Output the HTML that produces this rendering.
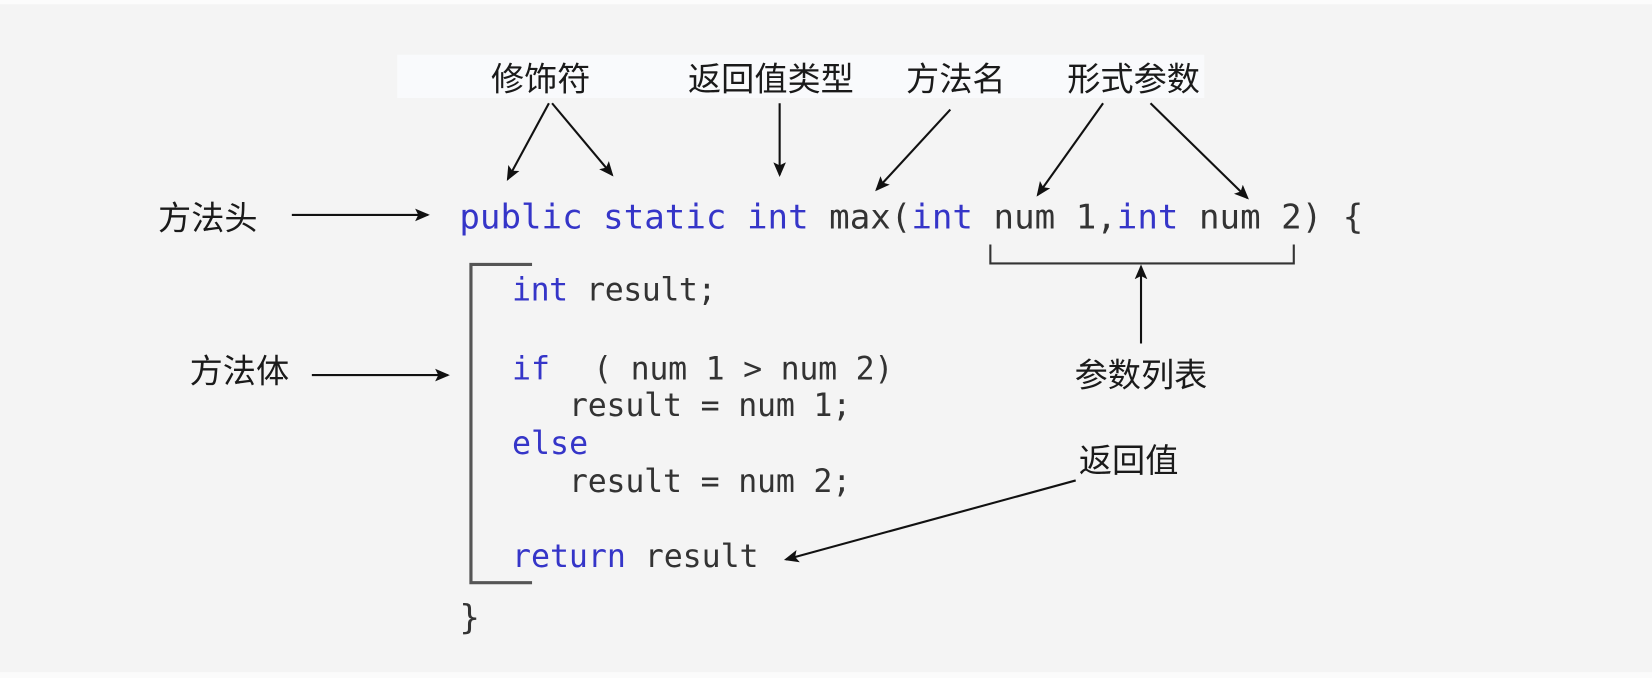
<!DOCTYPE html>
<html><head><meta charset="utf-8"><style>
html,body{margin:0;padding:0;background:#f4f4f4;}
svg{display:block}
.cn{font-family:"Liberation Sans","Noto Sans CJK SC",sans-serif;font-size:31.5px;fill:#1a1a1a}
.c{font-family:"DejaVu Sans Mono","Liberation Mono",monospace;font-size:32.4px;fill:#333}
.c2{font-family:"DejaVu Sans Mono","Liberation Mono",monospace;font-size:30px;fill:#333}
.k{fill:#3535c8}
</style></head><body>
<svg width="1652" height="678" viewBox="0 0 1568 643.5" preserveAspectRatio="none" xmlns="http://www.w3.org/2000/svg">
<defs>
<marker id="b" markerWidth="14" markerHeight="14" refX="12" refY="7" orient="auto" markerUnits="userSpaceOnUse"><path d="M0,1 L14,7 L0,13 L3,7 z" fill="#111"/></marker></defs>
<rect x="0" y="0" width="1568" height="643.5" fill="#f4f4f4"/>
<rect x="0" y="0" width="1568" height="4" fill="#fcfcfc"/>
<rect x="0" y="638" width="1568" height="6" fill="#fbfbfb"/>
<rect x="377" y="52" width="766" height="41" fill="#f9fafc"/>
<g class="cn">
<text x="466" y="86">修饰符</text>
<text x="653" y="86">返回值类型</text>
<text x="860" y="86">方法名</text>
<text x="1013" y="86">形式参数</text>
<text x="150" y="218">方法头</text>
<text x="180" y="363">方法体</text>
<text x="1020" y="367">参数列表</text>
<text x="1024" y="448">返回值</text>
</g>
<g stroke="#111" stroke-width="2" fill="none">
<line x1="521" y1="98" x2="482" y2="170" marker-end="url(#b)"/>
<line x1="524" y1="98" x2="581" y2="166" marker-end="url(#b)"/>
<line x1="740" y1="98" x2="740" y2="166" marker-end="url(#b)"/>
<line x1="902" y1="104" x2="832" y2="180" marker-end="url(#b)"/>
<line x1="1047" y1="98" x2="985" y2="185" marker-end="url(#b)"/>
<line x1="1092" y1="98" x2="1184" y2="188" marker-end="url(#b)"/>
<line x1="277" y1="204" x2="406" y2="204" marker-end="url(#b)"/>
<line x1="296" y1="356" x2="425" y2="356" marker-end="url(#b)"/>
<line x1="1083" y1="326" x2="1083" y2="253" marker-end="url(#b)"/>
<line x1="1021" y1="456" x2="746" y2="531" marker-end="url(#b)"/>
</g>
<path d="M505,251 H447 V553 H505" stroke="#555" stroke-width="3" fill="none"/>
<path d="M940,232 V250 H1228 V232" stroke="#333" stroke-width="2" fill="none"/>
<g class="c">
<text x="436" y="217"><tspan class="k">public static int</tspan> max(<tspan class="k">int</tspan> num 1,<tspan class="k">int</tspan> num 2) {</text>
<text x="436" y="597">}</text>
</g>
<g class="c2">
<text x="486" y="285" textLength="194"><tspan class="k">int</tspan> result;</text>
<text x="486" y="360"><tspan class="k">if</tspan></text>
<text x="563" y="360" textLength="285">( num 1 &gt; num 2)</text>
<text x="540" y="395" textLength="268">result = num 1;</text>
<text x="486" y="431" class="k">else</text>
<text x="540" y="467" textLength="268">result = num 2;</text>
<text x="486" y="538" textLength="234"><tspan class="k">return</tspan> result</text>
</g>
</svg>
</body></html>
